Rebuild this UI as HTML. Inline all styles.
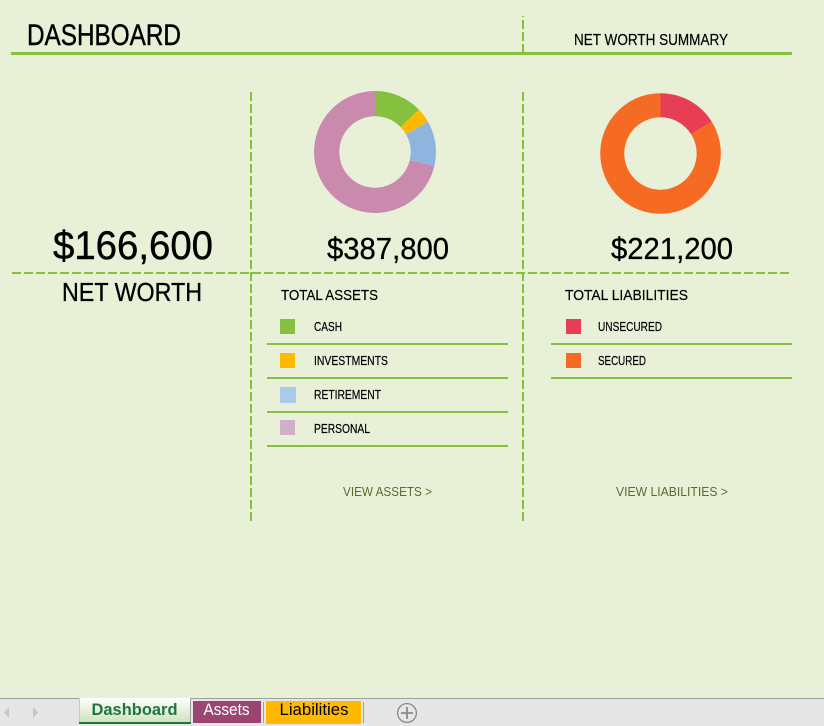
<!DOCTYPE html>
<html><head><meta charset="utf-8"><title>Dashboard</title>
<style>
html,body{margin:0;padding:0;width:824px;height:726px;overflow:hidden;background:#E8F1D8}
svg{display:block}
text{font-family:"Liberation Sans",sans-serif;fill:#000}
.h{stroke:#000;stroke-width:.45}
.m{stroke:#000;stroke-width:.3}
.s{stroke:#000;stroke-width:.2}
</style></head><body>
<svg width="824" height="726" viewBox="0 0 824 726" xmlns="http://www.w3.org/2000/svg">
<defs><linearGradient id="tab" x1="0" y1="0" x2="0" y2="1"><stop offset="0" stop-color="#ffffff"/><stop offset="1" stop-color="#CFE3BC"/></linearGradient></defs>
<rect width="824" height="726" fill="#E8F1D8"/>

<!-- header -->
<text class="h" x="27" y="45" font-size="30" textLength="154" lengthAdjust="spacingAndGlyphs">DASHBOARD</text>
<text class="s" x="574" y="45" font-size="15.5" textLength="154" lengthAdjust="spacingAndGlyphs">NET WORTH SUMMARY</text>
<rect x="11" y="52" width="781" height="3" fill="#86C03F"/>

<!-- dashed lines -->
<g stroke="#86C03F" stroke-width="2" fill="none" stroke-dasharray="9 3">
<path d="M523 16V52" stroke-dashoffset="8"/>
<path d="M251 92V521"/>
<path d="M523 92V521"/>
<path d="M12 273H789"/>
</g>

<!-- donut 1 -->
<g>
<path d="M375 91A61 61 0 0 1 418.9 109.6L400.7 127.2A35.7 35.7 0 0 0 375 116.3Z" fill="#86C03F"/>
<path d="M418.9 109.6A61 61 0 0 1 428 121.8L406 134.3A35.7 35.7 0 0 0 400.7 127.2Z" fill="#FFB900"/>
<path d="M428 121.8A61 61 0 0 1 434.4 166L409.7 160.2A35.7 35.7 0 0 0 406 134.3Z" fill="#8FB5DE"/>
<path d="M434.4 166A61 61 0 1 1 375 91V116.3A35.7 35.7 0 1 0 409.7 160.2Z" fill="#C98AAD"/>
</g>

<!-- donut 2 -->
<g>
<path d="M660.5 93.2A60.3 60.3 0 0 1 711.7 121.6L691.2 134.4A36.2 36.2 0 0 0 660.5 117.3Z" fill="#E83E55"/>
<path d="M711.7 121.6A60.3 60.3 0 1 1 660.5 93.2V117.3A36.2 36.2 0 1 0 691.2 134.4Z" fill="#F56B23"/>
</g>

<!-- big numbers -->
<text class="h" x="53" y="259" font-size="40" textLength="160" lengthAdjust="spacingAndGlyphs">$166,600</text>
<text class="m" x="327" y="259" font-size="31" textLength="122" lengthAdjust="spacingAndGlyphs">$387,800</text>
<text class="m" x="611" y="259" font-size="31" textLength="122" lengthAdjust="spacingAndGlyphs">$221,200</text>
<text class="m" x="62" y="301" font-size="26" textLength="140" lengthAdjust="spacingAndGlyphs">NET WORTH</text>

<text class="s" x="281" y="300" font-size="15" textLength="97" lengthAdjust="spacingAndGlyphs">TOTAL ASSETS</text>
<text class="s" x="565" y="300" font-size="15" textLength="123" lengthAdjust="spacingAndGlyphs">TOTAL LIABILITIES</text>

<!-- assets legend -->
<rect x="280" y="319" width="15" height="15" fill="#86C03F"/>
<rect x="280" y="353" width="15" height="15" fill="#FFB900"/>
<rect x="280" y="387" width="16" height="16" fill="#ABCBEB"/>
<rect x="280" y="420" width="15" height="15" fill="#CEB1C6"/>
<g font-size="12.5" class="s">
<text x="314" y="331" textLength="28" lengthAdjust="spacingAndGlyphs">CASH</text>
<text x="314" y="365" textLength="74" lengthAdjust="spacingAndGlyphs">INVESTMENTS</text>
<text x="314" y="399" textLength="67" lengthAdjust="spacingAndGlyphs">RETIREMENT</text>
<text x="314" y="433" textLength="56" lengthAdjust="spacingAndGlyphs">PERSONAL</text>
<text x="598" y="331" textLength="64" lengthAdjust="spacingAndGlyphs">UNSECURED</text>
<text x="598" y="365" textLength="48" lengthAdjust="spacingAndGlyphs">SECURED</text>
</g>
<g fill="#86C03F">
<rect x="267" y="343" width="241" height="2"/>
<rect x="267" y="377" width="241" height="2"/>
<rect x="267" y="411" width="241" height="2"/>
<rect x="267" y="445" width="241" height="2"/>
<rect x="551" y="343" width="241" height="2"/>
<rect x="551" y="377" width="241" height="2"/>
</g>

<!-- liabilities legend -->
<rect x="566" y="319" width="15" height="15" fill="#E83E55"/>
<rect x="566" y="353" width="15" height="15" fill="#F56B23"/>

<text x="343" y="496" font-size="12.5" textLength="89" lengthAdjust="spacingAndGlyphs" style="fill:#5A6B32">VIEW ASSETS &gt;</text>
<text x="616" y="496" font-size="12.5" textLength="112" lengthAdjust="spacingAndGlyphs" style="fill:#5A6B32">VIEW LIABILITIES &gt;</text>

<!-- tab bar -->
<rect x="0" y="698" width="824" height="28" fill="#E6E6E6"/>
<rect x="0" y="698" width="824" height="1" fill="#A0A0A0"/>
<path d="M9 707V718L4 712.5Z" fill="#C6C6C6"/>
<path d="M33 707V718L38 712.5Z" fill="#C6C6C6"/>

<rect x="80" y="698" width="110" height="24" fill="url(#tab)"/>
<rect x="79" y="698" width="1" height="25" fill="#C8C8C8"/>
<rect x="190" y="698" width="1" height="25" fill="#A0A0A0"/>
<rect x="79" y="722" width="112" height="2" fill="#217346"/>
<text x="91.5" y="715" font-size="17" font-weight="700" textLength="86" lengthAdjust="spacingAndGlyphs" style="fill:#217346">Dashboard</text>

<rect x="193" y="701" width="68" height="22" fill="#9C4573"/>
<text x="203.5" y="715" font-size="17" textLength="46" lengthAdjust="spacingAndGlyphs" style="fill:#fff">Assets</text>
<rect x="263" y="702" width="1" height="21" fill="#A0A0A0"/>
<rect x="266" y="701" width="95" height="23" fill="#FFB900"/>
<text x="279.5" y="715" font-size="17" textLength="69" lengthAdjust="spacingAndGlyphs">Liabilities</text>
<rect x="363" y="702" width="1" height="21" fill="#A0A0A0"/>

<circle cx="407" cy="713" r="9.4" fill="none" stroke="#8A8A8A" stroke-width="1.3"/>
<path d="M407 707V719M401 713H413" stroke="#8A8A8A" stroke-width="1.8" fill="none"/>
</svg>
</body></html>
